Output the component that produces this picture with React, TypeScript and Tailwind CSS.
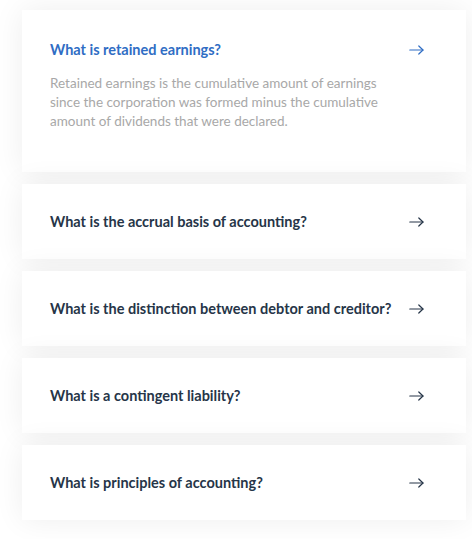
import React from "react";

const Arrow = ({ color }: { color: string }) => (
  <svg width="15" height="10" viewBox="0 0 15 10" fill="none" stroke={color} strokeWidth="1.2" strokeLinecap="round" strokeLinejoin="round">
    <path d="M0.8 5H14" />
    <path d="M9.8 1L14 5L9.8 9" />
  </svg>
);

const items = [
  "What is the accrual basis of accounting?",
  "What is the distinction between debtor and creditor?",
  "What is a contingent liability?",
  "What is principles of accounting?",
];

export default function App() {
  return (
    <div className="w-[472px] h-[539px] bg-white overflow-hidden" style={{ fontFamily: "Lato, 'Noto Sans', sans-serif" }}>
      <div className="flex flex-col gap-[12px] pt-[10px] pl-[22px] pr-[6px]">
        <div className="bg-white shadow-[0_0_30px_rgba(0,0,0,0.07)] pl-[28px] pr-[42px] pt-[30px] pb-[41px]">
          <div className="flex items-center justify-between h-[20px]">
            <span className="text-[14.5px] font-bold text-[#2f6dc4]">What is retained earnings?</span>
            <Arrow color="#2f6dc4" />
          </div>
          <p className="mt-[14px] text-[13.5px] leading-[19px] text-[#a8a8a8] w-[345px]">
            Retained earnings is the cumulative amount of earnings since the corporation was formed minus the cumulative amount of dividends that were declared.
          </p>
        </div>
        {items.map((q) => (
          <div key={q} className="bg-white shadow-[0_0_30px_rgba(0,0,0,0.07)] h-[75px] pl-[28px] pr-[42px] flex items-center justify-between">
            <span className="text-[14.5px] font-bold text-[#263548]">{q}</span>
            <Arrow color="#263548" />
          </div>
        ))}
      </div>
    </div>
  );
}
